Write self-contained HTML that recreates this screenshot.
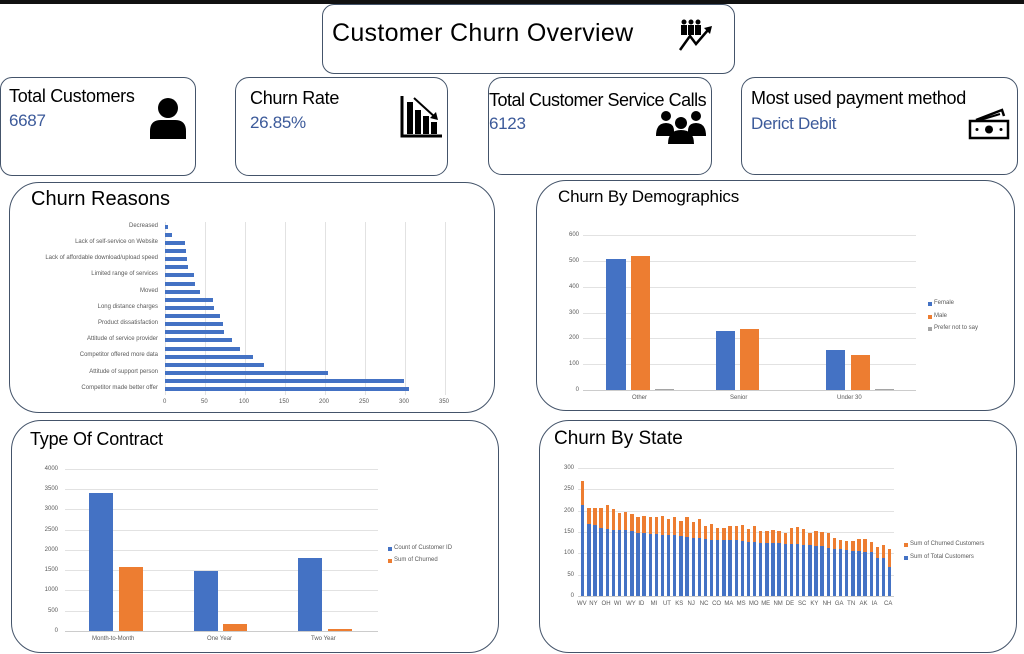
<!DOCTYPE html>
<html><head><meta charset="utf-8"><style>
*{margin:0;padding:0;box-sizing:border-box}
body{width:1024px;height:654px;background:#fff;position:relative;overflow:hidden;font-family:"Liberation Sans",sans-serif;color:#000}
.box{position:absolute;border:1px solid #44546a;background:#fff}
.a{position:absolute}
.t{position:absolute;white-space:nowrap}
.k{font-size:18px;letter-spacing:-0.3px}
.v{font-size:17px;color:#3c5a9a;letter-spacing:-0.3px}
.h{font-size:19px;letter-spacing:-0.2px}
.g{position:absolute;height:1px;background:#e2e2e2}
.gv{position:absolute;width:1px;background:#e2e2e2}
.s{font-size:6px;color:#595959}
.bl{background:#4472c4}.or{background:#ed7d31}
.rb{position:absolute;left:165px;height:4px;background:#4472c4}
</style></head><body>
<div class="a" style="left:0;top:0;width:1024px;height:4px;background:#111"></div>

<div class="box" style="left:322px;top:4px;width:413px;height:70px;border-radius:12px"></div>
<div class="t" style="left:332px;top:19px;font-size:25px;letter-spacing:0.3px">Customer Churn Overview</div>
<svg class="a" style="left:678px;top:18px" width="40" height="34" viewBox="0 0 40 34"><g fill="#000"><circle cx="6" cy="4" r="2.5"/><circle cx="13" cy="4" r="2.5"/><circle cx="20" cy="4" r="2.5"/><rect x="3" y="7" width="6" height="10"/><rect x="10" y="7" width="6" height="10"/><rect x="17" y="7" width="6" height="10"/></g><path d="M2 32 L12 18 L18 26 L30 12" stroke="#000" stroke-width="2.5" fill="none"/><path d="M26 10 L34 8 L32 16 Z" fill="#000"/></svg>

<div class="box" style="left:0;top:77px;width:196px;height:99px;border-radius:12px"></div>
<div class="t k" style="left:9px;top:86px">Total Customers</div>
<div class="t v" style="left:9px;top:111px">6687</div>
<svg class="a" style="left:148px;top:97px" width="40" height="42" viewBox="0 0 40 42"><circle cx="20" cy="11" r="10"/><path d="M2 42 V34 Q2 23 13 23 H27 Q38 23 38 34 V42Z"/></svg>

<div class="box" style="left:235px;top:77px;width:213px;height:99px;border-radius:14px"></div>
<div class="t k" style="left:250px;top:88px">Churn Rate</div>
<div class="t v" style="left:250px;top:113px">26.85%</div>
<svg class="a" style="left:400px;top:96px" width="42" height="42" viewBox="0 0 42 42"><path d="M2 0 V40 H42" stroke="#000" stroke-width="3" fill="none"/><rect x="7" y="6" width="6" height="32"/><rect x="15" y="14" width="6" height="24"/><rect x="23" y="20" width="6" height="18"/><rect x="31" y="26" width="6" height="12"/><path d="M14 2 L36 22" stroke="#000" stroke-width="2"/><path d="M30 22 L38 24 L36 16Z"/></svg>

<div class="box" style="left:488px;top:77px;width:224px;height:98px;border-radius:14px"></div>
<div class="t k" style="left:489px;top:90px;letter-spacing:-0.5px">Total Customer Service Calls</div>
<div class="t v" style="left:489px;top:114px">6123</div>
<svg class="a" style="left:656px;top:109px" width="50" height="35" viewBox="0 0 50 35"><circle cx="10" cy="7" r="5"/><circle cx="40" cy="7" r="5"/><circle cx="25" cy="14" r="6"/><path d="M0 27 Q0 14 10 14 Q18 14 18 22 L18 27Z"/><path d="M50 27 Q50 14 40 14 Q32 14 32 22 L32 27Z"/><path d="M12 35 Q12 21 25 21 Q38 21 38 35Z"/></svg>

<div class="box" style="left:741px;top:77px;width:277px;height:98px;border-radius:14px"></div>
<div class="t k" style="left:751px;top:88px">Most used payment method</div>
<div class="t v" style="left:751px;top:114px">Derict Debit</div>
<svg class="a" style="left:968px;top:108px" width="42" height="32" viewBox="0 0 42 32"><path d="M8 12 L34 2 L36 8" stroke="#000" stroke-width="2.5" fill="none"/><path d="M12 12 L32 6" stroke="#000" stroke-width="2"/><rect x="2" y="13" width="38" height="17" fill="none" stroke="#000" stroke-width="2.5"/><circle cx="21" cy="21.5" r="4"/><circle cx="9" cy="21.5" r="1.5"/><circle cx="33" cy="21.5" r="1.5"/></svg>

<!-- Churn reasons -->
<div class="box" style="left:9px;top:182px;width:486px;height:231px;border-radius:30px"></div>
<div class="t" style="left:31px;top:188px;font-size:20px">Churn Reasons</div>
<div class="gv" style="left:165px;top:222px;height:173px"></div>
<div class="gv" style="left:205px;top:222px;height:173px"></div>
<div class="gv" style="left:245px;top:222px;height:173px"></div>
<div class="gv" style="left:285px;top:222px;height:173px"></div>
<div class="gv" style="left:325px;top:222px;height:173px"></div>
<div class="gv" style="left:365px;top:222px;height:173px"></div>
<div class="gv" style="left:405px;top:222px;height:173px"></div>
<div class="gv" style="left:445px;top:222px;height:173px"></div>
<div class="rb" style="top:225px;width:3px"></div>
<div class="rb" style="top:233px;width:7px"></div>
<div class="rb" style="top:241px;width:20px"></div>
<div class="rb" style="top:249px;width:21px"></div>
<div class="rb" style="top:257px;width:22px"></div>
<div class="rb" style="top:265px;width:23px"></div>
<div class="rb" style="top:273px;width:29px"></div>
<div class="rb" style="top:282px;width:30px"></div>
<div class="rb" style="top:290px;width:35px"></div>
<div class="rb" style="top:298px;width:48px"></div>
<div class="rb" style="top:306px;width:49px"></div>
<div class="rb" style="top:314px;width:55px"></div>
<div class="rb" style="top:322px;width:58px"></div>
<div class="rb" style="top:330px;width:59px"></div>
<div class="rb" style="top:338px;width:67px"></div>
<div class="rb" style="top:347px;width:75px"></div>
<div class="rb" style="top:355px;width:88px"></div>
<div class="rb" style="top:363px;width:99px"></div>
<div class="rb" style="top:371px;width:163px"></div>
<div class="rb" style="top:379px;width:239px"></div>
<div class="rb" style="top:387px;width:244px"></div>
<div class="t s" style="right:866px;top:223px">Decreased</div>
<div class="t s" style="right:866px;top:239px">Lack of self-service on Website</div>
<div class="t s" style="right:866px;top:255px">Lack of affordable download/upload speed</div>
<div class="t s" style="right:866px;top:271px">Limited range of services</div>
<div class="t s" style="right:866px;top:288px">Moved</div>
<div class="t s" style="right:866px;top:304px">Long distance charges</div>
<div class="t s" style="right:866px;top:320px">Product dissatisfaction</div>
<div class="t s" style="right:866px;top:336px">Attitude of service provider</div>
<div class="t s" style="right:866px;top:352px">Competitor offered more data</div>
<div class="t s" style="right:866px;top:369px">Attitude of support person</div>
<div class="t s" style="right:866px;top:385px">Competitor made better offer</div>
<div class="t s" style="left:163px;top:399px">0</div>
<div class="t s" style="left:201px;top:399px">50</div>
<div class="t s" style="left:239px;top:399px">100</div>
<div class="t s" style="left:279px;top:399px">150</div>
<div class="t s" style="left:319px;top:399px">200</div>
<div class="t s" style="left:359px;top:399px">250</div>
<div class="t s" style="left:399px;top:399px">300</div>
<div class="t s" style="left:439px;top:399px">350</div>

<!-- Demographics -->
<div class="box" style="left:536px;top:180px;width:479px;height:231px;border-radius:30px"></div>
<div class="t h" style="left:558px;top:187px;font-size:17px">Churn By Demographics</div>
<div class="g" style="left:583px;top:235px;width:333px"></div>
<div class="g" style="left:583px;top:261px;width:333px"></div>
<div class="g" style="left:583px;top:287px;width:333px"></div>
<div class="g" style="left:583px;top:313px;width:333px"></div>
<div class="g" style="left:583px;top:338px;width:333px"></div>
<div class="g" style="left:583px;top:364px;width:333px"></div>
<div class="g" style="left:583px;top:390px;width:333px;background:#ccc"></div>
<div class="t s" style="right:445px;top:232px">600</div>
<div class="t s" style="right:445px;top:258px">500</div>
<div class="t s" style="right:445px;top:284px">400</div>
<div class="t s" style="right:445px;top:310px">300</div>
<div class="t s" style="right:445px;top:335px">200</div>
<div class="t s" style="right:445px;top:361px">100</div>
<div class="t s" style="right:445px;top:387px">0</div>
<div class="a bl" style="left:606px;top:259px;width:20px;height:131px"></div>
<div class="a or" style="left:631px;top:256px;width:19px;height:134px"></div>
<div class="a" style="left:655px;top:389px;width:19px;height:1px;background:#a5a5a5"></div>
<div class="a bl" style="left:716px;top:331px;width:19px;height:59px"></div>
<div class="a or" style="left:740px;top:329px;width:19px;height:61px"></div>
<div class="a bl" style="left:826px;top:350px;width:19px;height:40px"></div>
<div class="a or" style="left:851px;top:355px;width:19px;height:35px"></div>
<div class="a" style="left:875px;top:389px;width:19px;height:1px;background:#a5a5a5"></div>
<div class="t s" style="left:632px;top:395px">Other</div>
<div class="t s" style="left:730px;top:395px">Senior</div>
<div class="t s" style="left:837px;top:395px">Under 30</div>
<div class="a bl" style="left:928px;top:302px;width:4px;height:4px"></div><div class="t s" style="left:934px;top:300px">Female</div>
<div class="a or" style="left:928px;top:315px;width:4px;height:4px"></div><div class="t s" style="left:934px;top:313px">Male</div>
<div class="a" style="left:928px;top:327px;width:4px;height:4px;background:#a5a5a5"></div><div class="t s" style="left:934px;top:325px">Prefer not to say</div>

<!-- Contract -->
<div class="box" style="left:11px;top:420px;width:488px;height:233px;border-radius:30px"></div>
<div class="t h" style="left:30px;top:429px;font-size:18px">Type Of Contract</div>
<div class="g" style="left:65px;top:469px;width:313px"></div>
<div class="g" style="left:65px;top:489px;width:313px"></div>
<div class="g" style="left:65px;top:509px;width:313px"></div>
<div class="g" style="left:65px;top:530px;width:313px"></div>
<div class="g" style="left:65px;top:550px;width:313px"></div>
<div class="g" style="left:65px;top:570px;width:313px"></div>
<div class="g" style="left:65px;top:590px;width:313px"></div>
<div class="g" style="left:65px;top:611px;width:313px"></div>
<div class="g" style="left:65px;top:631px;width:313px;background:#ccc"></div>
<div class="t s" style="right:966px;top:466px">4000</div>
<div class="t s" style="right:966px;top:486px">3500</div>
<div class="t s" style="right:966px;top:506px">3000</div>
<div class="t s" style="right:966px;top:527px">2500</div>
<div class="t s" style="right:966px;top:547px">2000</div>
<div class="t s" style="right:966px;top:567px">1500</div>
<div class="t s" style="right:966px;top:587px">1000</div>
<div class="t s" style="right:966px;top:608px">500</div>
<div class="t s" style="right:966px;top:628px">0</div>
<div class="a bl" style="left:89px;top:493px;width:24px;height:138px"></div>
<div class="a or" style="left:119px;top:567px;width:24px;height:64px"></div>
<div class="a bl" style="left:194px;top:571px;width:24px;height:60px"></div>
<div class="a or" style="left:223px;top:624px;width:24px;height:7px"></div>
<div class="a bl" style="left:298px;top:558px;width:24px;height:73px"></div>
<div class="a or" style="left:328px;top:629px;width:24px;height:2px"></div>
<div class="t s" style="left:92px;top:636px">Month-to-Month</div>
<div class="t s" style="left:207px;top:636px">One Year</div>
<div class="t s" style="left:311px;top:636px">Two Year</div>
<div class="a bl" style="left:388px;top:547px;width:4px;height:4px"></div><div class="t s" style="left:394px;top:545px">Count of Customer ID</div>
<div class="a or" style="left:388px;top:559px;width:4px;height:4px"></div><div class="t s" style="left:394px;top:557px">Sum of Churned</div>

<!-- State -->
<div class="box" style="left:539px;top:420px;width:478px;height:233px;border-radius:30px"></div>
<div class="t" style="left:554px;top:428px;font-size:19px">Churn By State</div>
<div class="g" style="left:578px;top:468px;width:316px"></div>
<div class="g" style="left:578px;top:489px;width:316px"></div>
<div class="g" style="left:578px;top:511px;width:316px"></div>
<div class="g" style="left:578px;top:532px;width:316px"></div>
<div class="g" style="left:578px;top:553px;width:316px"></div>
<div class="g" style="left:578px;top:575px;width:316px"></div>
<div class="g" style="left:578px;top:596px;width:316px;background:#ccc"></div>
<div class="t s" style="right:450px;top:465px">300</div>
<div class="t s" style="right:450px;top:486px">250</div>
<div class="t s" style="right:450px;top:508px">200</div>
<div class="t s" style="right:450px;top:529px">150</div>
<div class="t s" style="right:450px;top:550px">100</div>
<div class="t s" style="right:450px;top:572px">50</div>
<div class="t s" style="right:450px;top:593px">0</div>
<div class="a" style="left:581px;top:0;width:320px;height:654px">
<script>
(function(){var b=[213,168,166,160,157,155,155,154,152,147,147,146,145,144,143,142,140,138,136,136,134,132,132,131,131,130,128,127,126,124,124,124,123,122,121,121,120,120,118,116,113,110,109,108,106,105,104,102,90,90,68];
var t=[270,205,205,207,212,203,194,196,191,186,187,186,186,187,180,184,176,186,173,180,163,168,160,160,163,163,166,157,163,153,153,154,153,147,159,162,156,147,152,149,147,136,132,129,129,133,133,127,115,120,111];
var L=["WV","NY","OH","WI","WY","ID","MI","UT","KS","NJ","NC","CO","MA","MS","MO","ME","NM","DE","SC","KY","NH","GA","TN","AK","IA","CA"];
var h="",k=0.427;for(var i=0;i<51;i++){var x=i*6.14;h+='<div class="a or" style="left:'+x+'px;top:'+(596-t[i]*k)+'px;width:3.4px;height:'+((t[i]-b[i])*k)+'px"></div><div class="a bl" style="left:'+x+'px;top:'+(596-b[i]*k)+'px;width:3.4px;height:'+(b[i]*k)+'px"></div>';
if(i%2==0)h+='<div class="t s" style="left:'+(x-4)+'px;top:601px">'+L[i/2]+'</div>';}
document.write(h);})();
</script>
</div>
<div class="a or" style="left:904px;top:543px;width:4px;height:4px"></div><div class="t s" style="left:910px;top:541px">Sum of Churned Customers</div>
<div class="a bl" style="left:904px;top:556px;width:4px;height:4px"></div><div class="t s" style="left:910px;top:554px">Sum of Total Customers</div>
</body></html>
